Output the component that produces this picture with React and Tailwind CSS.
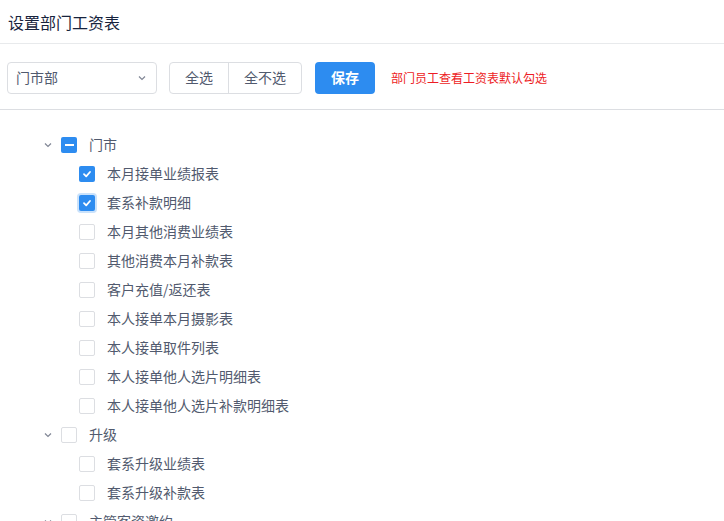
import { useState } from "react";

const groups = [
  {
    name: "门市",
    open: true,
    items: [
      { name: "本月接单业绩报表", checked: true },
      { name: "套系补款明细", checked: true, focus: true },
      { name: "本月其他消费业绩表" },
      { name: "其他消费本月补款表" },
      { name: "客户充值/返还表" },
      { name: "本人接单本月摄影表" },
      { name: "本人接单取件列表" },
      { name: "本人接单他人选片明细表" },
      { name: "本人接单他人选片补款明细表" },
    ],
  },
  {
    name: "升级",
    open: true,
    items: [{ name: "套系升级业绩表" }, { name: "套系升级补款表" }],
  },
  { name: "主管客资邀约", open: true, items: [] },
];

function Check({ state, focus }) {
  if (state === "checked") {
    return (
      <span
        className={
          "flex h-4 w-4 items-center justify-center rounded-[2px] bg-[#2d8cf0] " +
          (focus ? "ring-2 ring-[#2d8cf0]/25" : "")
        }
      >
        <svg width="10" height="10" viewBox="0 0 10 10">
          <path d="M2 5.2 L4.2 7.3 L8 3" fill="none" stroke="white" strokeWidth="1.8" strokeLinecap="round" strokeLinejoin="round" />
        </svg>
      </span>
    );
  }
  if (state === "half") {
    return (
      <span className="flex h-4 w-4 items-center justify-center rounded-[2px] bg-[#2d8cf0]">
        <span className="h-[2px] w-[9px] bg-white" />
      </span>
    );
  }
  return <span className="h-4 w-4 rounded-[2px] border border-[#dcdee2] bg-white" />;
}

export default function App() {
  const [dept] = useState("门市部");

  return (
    <div
      className="h-[521px] w-[724px] overflow-hidden bg-white text-[14px] text-[#515a6e]"
      style={{ fontFamily: '"Noto Sans CJK SC", "Noto Sans", sans-serif' }}
    >
      <div className="flex h-[44px] items-center border-b border-[#e8eaec] px-2 text-[16px] text-[#17233d]">
        设置部门工资表
      </div>

      {/* toolbar */}
      <div className="flex h-[66px] items-center border-b border-[#dcdee2] pl-[7px] pt-[2px]">
        <div className="flex h-[32px] w-[150px] items-center justify-between rounded-[4px] border border-[#dcdee2] pl-[8px] pr-[8px]">
          <span>{dept}</span>
          <svg width="12" height="12" viewBox="0 0 12 12">
            <path d="M3 4.5 L6 7.5 L9 4.5" fill="none" stroke="#808695" strokeWidth="1.2" />
          </svg>
        </div>
        <div className="ml-[12px] flex h-[32px] overflow-hidden rounded-[4px] border border-[#dcdee2]">
          <button className="w-[59px] border-r border-[#dcdee2]">全选</button>
          <button className="w-[72px]">全不选</button>
        </div>
        <button className="ml-[13px] h-[32px] w-[60px] rounded-[4px] bg-[#2d8cf0] font-bold text-white">保存</button>
        <span className="ml-[16px] text-[12px] text-[#ed1c24]">部门员工查看工资表默认勾选</span>
      </div>

      {/* tree */}
      <div className="pt-[20px] pl-[42px]">
        {groups.map((g) => {
          const n = g.items.filter((i) => i.checked).length;
          const state = n === 0 ? "none" : n === g.items.length ? "checked" : "half";
          return (
            <div key={g.name}>
              <div className="flex h-[29px] items-center">
                <svg width="12" height="12" viewBox="0 0 12 12" className="mr-[7px]">
                  <path d="M3 4.5 L6 7.5 L9 4.5" fill="none" stroke="#808695" strokeWidth="1.2" />
                </svg>
                <Check state={state} />
                <span className="ml-[12px]">{g.name}</span>
              </div>
              {g.open &&
                g.items.map((it) => (
                  <div key={it.name} className="flex h-[29px] items-center pl-[37px]">
                    <Check state={it.checked ? "checked" : "none"} focus={it.focus} />
                    <span className="ml-[12px]">{it.name}</span>
                  </div>
                ))}
            </div>
          );
        })}
      </div>
    </div>
  );
}
